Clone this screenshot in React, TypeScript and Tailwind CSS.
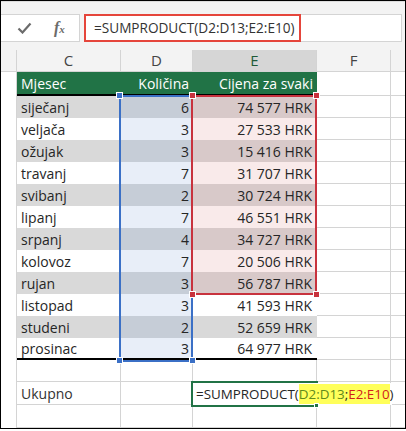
import React from "react"

const months = ["siječanj", "veljača", "ožujak", "travanj", "svibanj", "lipanj", "srpanj", "kolovoz", "rujan", "listopad", "studeni", "prosinac"]
const qty = [6, 3, 3, 7, 2, 7, 4, 7, 3, 3, 2, 3]
const prices = ["74 577", "27 533", "15 416", "31 707", "30 724", "46 551", "34 727", "20 506", "56 787", "41 593", "52 659", "64 977"]

const grid = "border-[#d4d4d4]"

function Handle({ className }: { className: string }) {
  return <div className={`absolute w-[7px] h-[7px] border border-white ${className}`} />
}

export default function App() {
  return (
    <div className="relative w-[406px] h-[431px] bg-white font-['Open_Sans',sans-serif] text-[14px] text-[#262626]">
      <div className="w-[406px] h-[429px] border border-black flex flex-col overflow-hidden bg-[#f3f3f3]">
        {/* traka na vrhu */}
        <div className="h-[13px] border-t border-[#dcdcdc]" />

        {/* traka formule */}
        <div className="h-[28px] flex gap-[4px] pr-[3px]">
          <div className="w-[79px] bg-white border border-l-0 border-[#d4d4d4] flex items-center">
            <div className="w-[46px] flex justify-center">
              <svg width="15" height="12" viewBox="0 0 15 12" fill="none">
                <path d="M1.5 6.5 L5.5 10.5 L13.5 1.5" stroke="#6b6b6b" strokeWidth="2.2" />
              </svg>
            </div>
            <span className="font-['Liberation_Serif',serif] italic font-bold text-[16px] text-[#6b6b6b] leading-none ml-[7px]">
              f<span className="text-[11px]">x</span>
            </span>
          </div>
          <div className="relative flex-1 bg-white border border-[#d4d4d4] flex items-center pl-[9px] text-[13.6px] text-[#333]">
            =SUMPRODUCT(D2:D13;E2:E10)
            <div className="absolute -left-px -top-px w-[217px] h-[28px] border-2 border-[#e5453b]" />
          </div>
        </div>

        <div className="h-[8px]" />

        {/* zaglavlja stupaca */}
        <div className={`h-[22px] flex border-b ${grid} text-[15px] text-[#444]`}>
          <div className={`w-[16px] border-r ${grid}`} />
          <div className={`w-[104px] border-r ${grid} flex items-center justify-center`}>C</div>
          <div className={`w-[72px] border-r ${grid} flex items-center justify-center`}>D</div>
          <div className={`w-[124px] border-r ${grid} bg-[#d6d6d6] flex items-center justify-center text-[#1e5a38]`}>E</div>
          <div className={`w-[74px] border-r ${grid} flex items-center justify-center`}>F</div>
          <div className="flex-1" />
        </div>

        {/* zaglavlje tablice */}
        <div className="h-[24px] flex bg-white">
          <div className={`w-[16px] border-r ${grid}`} />
          <div className="w-[104px] bg-[#217346] text-white border-b-2 border-black pl-[4px] flex items-center">Mjesec</div>
          <div className="w-[72px] bg-[#217346] text-white border-b-2 border-black pr-[4px] flex items-center justify-end">Količina</div>
          <div className="w-[124px] bg-[#217346] text-white border-b-2 border-black pr-[4px] flex items-center justify-end">Cijena za svaki</div>
          <div className={`w-[74px] border-r border-b ${grid}`} />
          <div className={`flex-1 border-b ${grid}`} />
        </div>

        {/* podaci */}
        {months.map((m, i) => {
          const gray = i % 2 === 0
          const last = i === months.length - 1
          const inRed = i <= 8
          const cBg = gray ? "bg-[#d9d9d9]" : "bg-white"
          const dBg = gray ? "bg-[#c6cdd7]" : "bg-[#e8eef8]"
          const eBg = inRed ? (gray ? "bg-[#d8c9c9]" : "bg-[#f9eaea]") : cBg
          const bottom = last ? "border-b-2 border-black" : ""
          return (
            <div key={m} className="h-[22px] flex bg-white">
              <div className={`w-[16px] border-r ${grid}`} />
              <div className={`w-[104px] ${cBg} ${bottom} pl-[4px] flex items-center`}>{m}</div>
              <div className={`w-[72px] ${dBg} ${bottom} pr-[4px] flex items-center justify-end`}>{qty[i]}</div>
              <div className={`w-[124px] ${eBg} ${bottom} pr-[5px] flex items-center justify-end`}>{prices[i]} HRK</div>
              <div className={`w-[74px] border-r border-b ${grid}`} />
              <div className={`flex-1 border-b ${grid}`} />
            </div>
          )
        })}

        {/* prazan red, ukupno, prazan red */}
        {["", "Ukupno", ""].map((label, i) => (
          <div key={i} className={`${i === 0 ? "h-[22px]" : "h-[23px]"} flex bg-white`}>
            <div className={`w-[16px] border-r ${grid}`} />
            <div className={`w-[104px] border-r border-b ${grid} pl-[4px] flex items-center text-[#333]`}>{label}</div>
            <div className={`w-[72px] border-r border-b ${grid}`} />
            <div className={`w-[124px] border-r border-b ${grid}`} />
            <div className={`w-[74px] border-r border-b ${grid}`} />
            <div className={`flex-1 border-b ${grid}`} />
          </div>
        ))}
      </div>

      {/* plavi odabir D2:D13 */}
      <div className="absolute left-[119px] top-[95px] w-[74px] h-[267px] border-2 border-[#3b70c6]" />
      <Handle className="left-[116px] top-[92px] bg-[#3b70c6]" />
      <Handle className="left-[116px] top-[357px] bg-[#3b70c6]" />
      <Handle className="left-[189px] top-[357px] bg-[#3b70c6]" />

      {/* crveni odabir E2:E10 */}
      <div className="absolute left-[191px] top-[95px] w-[126px] h-[200px] border-2 border-[#c8323d]" />
      <Handle className="left-[189px] top-[92px] bg-[#c8323d]" />
      <Handle className="left-[313px] top-[92px] bg-[#c8323d]" />
      <Handle className="left-[189px] top-[291px] bg-[#c8323d]" />
      <Handle className="left-[313px] top-[291px] bg-[#c8323d]" />

      {/* uređivanje ćelije E16 */}
      <div className="absolute left-[193px] top-[383px] w-[199px] h-[22px] bg-white flex items-center pl-[3px] whitespace-nowrap text-[13.4px] text-[#262626]">
        =SUMPRODUCT(
        <span className="bg-[#ffff5a]">
          <span className="text-[#5f8a1c]">D2:D13</span>;<span className="text-[#d01c1c]">E2:E10</span>
        </span>
        )
        <span className="ml-[1px] w-px h-[17px] bg-black" />
      </div>
      <div className="absolute left-[191px] top-[381px] w-[127px] h-[26px] border-2 border-r-0 border-[#217346]" />
      <div className="absolute left-[314px] top-[403px] w-[5px] h-[5px] bg-[#217346] border border-white" />
    </div>
  )
}
